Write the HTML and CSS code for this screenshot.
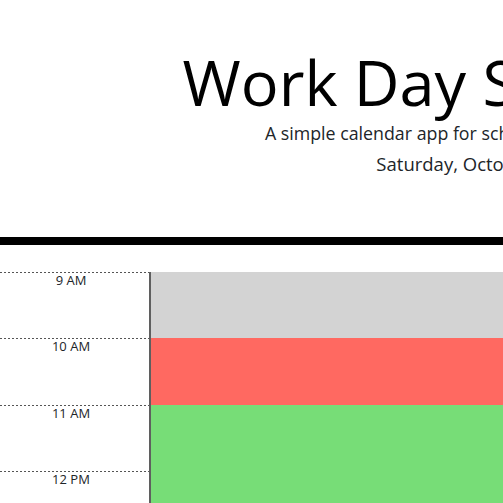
FILE: index.html
```html
<!DOCTYPE html>
<html lang="en">
<head>
<meta charset="utf-8">
<title>Work Day Scheduler</title>
<link rel="stylesheet" href="styles.css">
</head>
<body>
<div class="page">
  <header class="jumbotron">
    <h1 class="title">Work Day Scheduler</h1>
    <p class="lead">A simple calendar app for scheduling your work day</p>
    <p class="current-day">Saturday, October 22nd</p>
  </header>
  <main class="schedule">
    <div class="time-block">
      <div class="hour">9 AM</div>
      <textarea class="description past"></textarea>
      <button class="save-btn">Save</button>
    </div>
    <div class="time-block">
      <div class="hour">10 AM</div>
      <textarea class="description present"></textarea>
      <button class="save-btn">Save</button>
    </div>
    <div class="time-block">
      <div class="hour">11 AM</div>
      <textarea class="description future"></textarea>
      <button class="save-btn">Save</button>
    </div>
    <div class="time-block">
      <div class="hour">12 PM</div>
      <textarea class="description future"></textarea>
      <button class="save-btn">Save</button>
    </div>
    <div class="time-block">
      <div class="hour">1 PM</div>
      <textarea class="description future"></textarea>
      <button class="save-btn">Save</button>
    </div>
  </main>
</div>
</body>
</html>
```
FILE: styles.css
```css
html, body {
  margin: 0;
  padding: 0;
  overflow: hidden;
  background: #fff;
}

.page {
  width: 958px;
}

.jumbotron {
  box-sizing: border-box;
  height: 245px;
  padding-top: 44px;
  border-bottom: 8px solid #000;
  text-align: center;
  font-family: "Open Sans", sans-serif;
  color: #212529;
}

.title {
  margin: 0;
  font-size: 63px;
  font-weight: 400;
  line-height: 1.2;
  color: #000;
}

.lead {
  margin: 0;
  font-size: 17.8px;
  line-height: 27px;
}

.current-day {
  margin: 3px 0 0;
  font-size: 18.5px;
  line-height: 27px;
}

.schedule {
  padding-top: 27px;
}

.time-block {
  display: flex;
  height: 66.33px;
}

.hour {
  width: 149px;
  flex: none;
  box-sizing: border-box;
  padding: 1px 7px 0 0;
  background: repeating-linear-gradient(to right, #555 0 2px, transparent 2px 4px) top left / 100% 1px no-repeat;
  text-align: center;
  font-family: "Open Sans", sans-serif;
  font-size: 13px;
  line-height: 15px;
  color: #212529;
}

.description {
  flex: 1;
  margin: 0;
  padding: 0;
  border: none;
  border-left: 2px solid #5f5f5f;
  resize: none;
  outline: none;
}

.past { background: #d3d3d3; }
.present { background: #ff6961; }
.future { background: #77dd77; }

.save-btn {
  width: 80px;
  flex: none;
  border: none;
  background: #06aed5;
  color: #fff;
}
```
